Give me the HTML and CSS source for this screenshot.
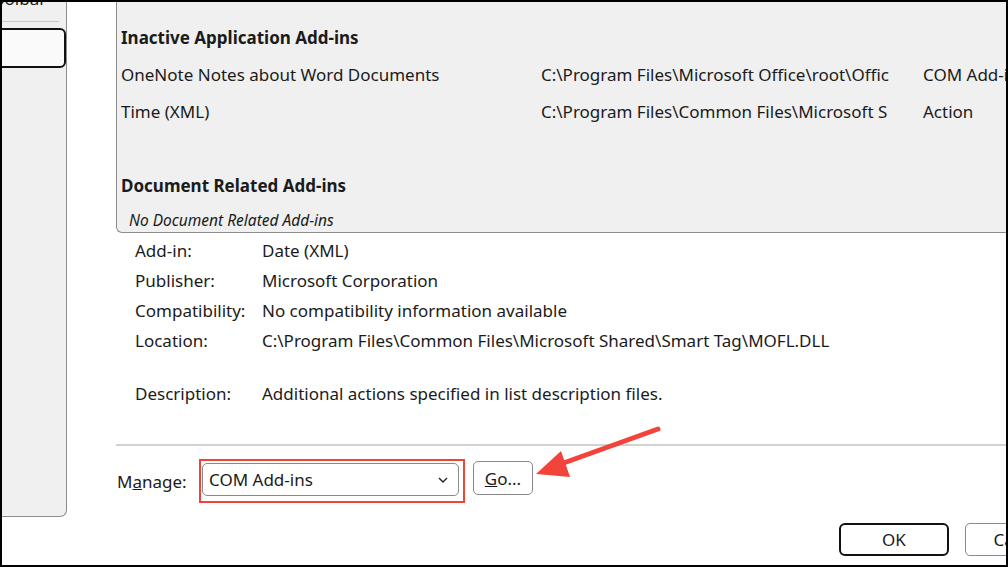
FILE: index.html
```html
<!doctype html>
<html lang="en">
 <head>
  <meta charset="UTF-8">
  <title>Add-ins</title>
  <link rel="stylesheet" href="styles.css">
 </head>
 <body>
  <div class="frame">
   <div class="sidebar">
    <div class="nav-item cut">Toolbar</div>
    <div class="nav-sep"></div>
    <div class="nav-item selected"></div>
   </div>
   <div class="main">
    <div class="addin-list">
     <div class="group-title">Inactive Application Add-ins</div>
     <div class="row">
      <span>OneNote Notes about Word Documents</span>
      <span>C:\Program Files\Microsoft Office\root\Offic</span>
      <span>COM Add-in</span>
     </div>
     <div class="row">
      <span>Time (XML)</span>
      <span>C:\Program Files\Common Files\Microsoft S</span>
      <span>Action</span>
     </div>
     <div class="row"></div>
     <div class="group-title">Document Related Add-ins</div>
     <div class="empty-note">No Document Related Add-ins</div>
    </div>

    <div class="details">
     <div class="detail"><span class="label">Add-in:</span><span>Date (XML)</span></div>
     <div class="detail"><span class="label">Publisher:</span><span>Microsoft Corporation</span></div>
     <div class="detail"><span class="label">Compatibility:</span><span>No compatibility information available</span></div>
     <div class="detail"><span class="label">Location:</span><span>C:\Program Files\Common Files\Microsoft Shared\Smart Tag\MOFL.DLL</span></div>
     <div class="detail desc"><span class="label">Description:</span><span>Additional actions specified in list description files.</span></div>
    </div>

    <div class="separator"></div>

    <div class="manage">
     <span class="manage-label">M<u>a</u>nage:</span>
     <div class="highlight">
      <div class="select">
       <span>COM Add-ins</span>
       <svg width="10" height="6" viewBox="0 0 10 6"><path d="M1 1l4 4 4-4" fill="none" stroke="#222" stroke-width="1.4"/></svg>
      </div>
     </div>
     <button class="btn go"><u>G</u>o...</button>
    </div>

    <div class="actions">
     <button class="btn ok">OK</button>
     <button class="btn cancel">Cancel</button>
    </div>
   </div>

   <svg class="arrow" width="1008" height="567" viewBox="0 0 1008 567">
    <line x1="658" y1="429" x2="558" y2="465" stroke="#f2443a" stroke-width="5" stroke-linecap="round"/>
    <polygon points="536,474 561,451 570,477" fill="#f2443a"/>
   </svg>
  </div>
 </body>
</html>
```

FILE: styles.css
```css
* {
  margin: 0;
  padding: 0;
  box-sizing: border-box;
}

body {
  font-family: 'Noto Sans', 'Open Sans', sans-serif;
  font-size: 17px;
  color: #1b1b1b;
  background: #fff;
}

.frame {
  position: relative;
  width: 1008px;
  height: 567px;
  border: 2px solid #000;
  display: flex;
  align-items: flex-start;
  overflow: hidden;
  background: #fff;
}

/* left nav, cropped */
.sidebar {
  flex: 0 0 65px;
  height: 515px;
  background: #f0f0f0;
  border-right: 1px solid #8c8c8c;
  border-bottom: 1px solid #8c8c8c;
  border-bottom-right-radius: 7px;
  overflow: hidden;
}

.nav-item.cut {
  margin-top: -12px;
  margin-left: -16px;
  line-height: 18px;
  white-space: nowrap;
}

.nav-sep {
  height: 1px;
  width: 57px;
  background: #c8c8c8;
  margin-top: 13px;
}

.nav-item.selected {
  height: 40px;
  margin-top: 6px;
  margin-left: -10px;
  background: #fafafa;
  border: 2px solid #111;
  border-radius: 6px;
}

.main {
  flex: 0 0 1000px;
  margin-left: 49px;
}

/* add-in list box */
.addin-list {
  height: 231px;
  background: #f0f0f0;
  border-left: 1px solid #8c8c8c;
  border-bottom: 1px solid #8c8c8c;
  border-bottom-left-radius: 6px;
  padding: 17px 0 0 4px;
}

.group-title {
  font-weight: bold;
  line-height: 37px;
  height: 37px;
}

.row {
  display: grid;
  grid-template-columns: 420px 382px 1fr;
  line-height: 37px;
  height: 37px;
  white-space: nowrap;
}

.empty-note {
  font-style: italic;
  font-size: 15.5px;
  line-height: 26px;
  margin-top: 3px;
  padding-left: 8px;
}

.details {
  margin-top: 3px;
  padding-left: 19px;
}

.detail {
  display: flex;
  line-height: 30px;
  white-space: nowrap;
}

.detail.desc {
  margin-top: 23px;
}

.label {
  width: 127px;
  flex: 0 0 127px;
}

.separator {
  height: 2px;
  background: #d2d2d2;
  margin-top: 35px;
}

.manage {
  display: flex;
  align-items: center;
  margin-top: 13px;
}

.manage-label {
  width: 83px;
  padding-left: 1px;
}

.highlight {
  border: 2px solid #ef4438;
  padding: 2px 4px 5px 1px;
}

.select {
  width: 257px;
  height: 33px;
  border: 1px solid #8a8a8a;
  border-radius: 5px;
  background: #fff;
  display: flex;
  align-items: center;
  justify-content: space-between;
  padding: 0 10px 0 6px;
}

.btn {
  font-family: inherit;
  font-size: 17px;
  color: #1b1b1b;
  background: #fff;
  border: 1px solid #8a8a8a;
  border-radius: 5px;
}

.go {
  width: 60px;
  height: 34px;
  margin-left: 8px;
  margin-top: -6px;
}

.actions {
  display: flex;
  gap: 16px;
  margin-top: 20px;
  padding-left: 723px;
}

.ok, .cancel {
  width: 110px;
  height: 33px;
  flex: 0 0 110px;
}

.ok {
  border: 2px solid #111;
  border-radius: 6px;
}

.arrow {
  position: absolute;
  left: -2px;
  top: -2px;
  pointer-events: none;
}
```
